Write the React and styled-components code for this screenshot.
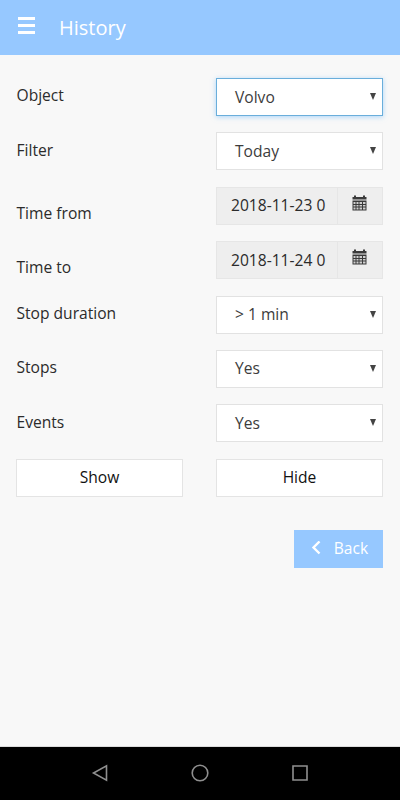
import React from 'react'
import styled, { createGlobalStyle } from 'styled-components';

const GlobalStyle = createGlobalStyle`
  * {
    box-sizing: border-box;
  }
  body {
    margin: 0;
    background: #f8f8f8;
    font-family: "Open Sans", "Noto Sans", sans-serif;
  }
`;

const Page = styled.div`
  display: flex;
  flex-direction: column;
  width: 400px;
  height: 800px;
  overflow: hidden;
  background: #f8f8f8;
  color: #2b2b2b;
  font-size: 15.6px;
  font-weight: 380;
`;

const Header = styled.header`
  display: flex;
  align-items: center;
  height: 55px;
  flex-shrink: 0;
  padding: 0 18px;
  gap: 24px;
  background: #96c8ff;
`;

const MenuButton = styled.div`
  display: flex;
  flex-direction: column;
  justify-content: space-between;
  width: 17px;
  height: 17px;
  margin-top: -4px;
`;

const MenuBar = styled.span`
  height: 3.4px;
  background: #fff;
`;

const Title = styled.h1`
  margin: 0;
  font-size: 20px;
  line-height: 28px;
  font-weight: 390;
  color: #fff;
`;

const Form = styled.main`
  display: flex;
  flex-direction: column;
  flex: 1;
  gap: 16.4px;
  padding: 23px 17px 0 16px;
  border-bottom: 1px solid #dcdcdc;
`;

const Row = styled.div`
  display: grid;
  grid-template-columns: 167px 167px;
  justify-content: space-between;
  height: 38px;
  flex-shrink: 0;
`;

const Label = styled.label`
  line-height: 22px;
  padding-left: 0.5px;
  padding-top: ${({ $low }) => ($low ? '15px' : '6.4px')};
`;

const Select = styled.div`
  display: flex;
  align-items: center;
  justify-content: space-between;
  padding: 0 6px 1px 18px;
  background: #fff;
  color: #3c3c3c;
  border: 1px solid ${({ $focused }) => ($focused ? '#6aaedb' : '#e2e2e2')};
  box-shadow: ${({ $focused }) => ($focused ? '0 1px 5px rgba(120, 190, 250, 0.6)' : 'none')};
`;

const Arrow = styled.span`
  width: 0;
  height: 0;
  border-left: 3.5px solid transparent;
  border-right: 3.5px solid transparent;
  border-top: 7px solid #444;
`;

const DateGroup = styled.div`
  display: flex;
  background: #eee;
  border: 1px solid #e6e6e6;
`;

const DateValue = styled.div`
  display: flex;
  align-items: center;
  width: 121px;
  padding: 0 0 1px 14px;
  white-space: nowrap;
  border-right: 1px solid #e6e6e6;
`;

const DateIcon = styled.div`
  flex: 1;
  display: flex;
  justify-content: center;
  padding: 7px 1px 0 0;
`;

const Button = styled.button`
  display: flex;
  align-items: center;
  justify-content: center;
  padding: 0 0 1px;
  font: inherit;
  color: #111;
  background: #fff;
  border: 1px solid #e4e4e4;
`;

const Footer = styled.div`
  display: flex;
  justify-content: flex-end;
  margin-top: 16.4px;
`;

const BackButton = styled(Button)`
  width: 89px;
  height: 38px;
  gap: 13px;
  padding-left: 2px;
  color: #fff;
  background: #96c8ff;
  border: none;
`;

const SystemBar = styled.nav`
  display: flex;
  align-items: center;
  justify-content: center;
  gap: 82px;
  height: 53px;
  flex-shrink: 0;
  padding-bottom: 1px;
  background: #000;
`;

const CalendarIcon = () => (
  <svg width="15" height="16" viewBox="0 0 15 16">
    <path d="M.5 2h1.5V.5h2V2h7V.5h2V2h1.5v2.5H.5z" fill="#3a3a3a" />
    <path d="M.5 5.5h14v10H.5z" fill="#3a3a3a" />
    <path
      d="M1.5 7h2v2h-2zM4.500 7h2v2h-2zM7.500 7h2.500v2h-2.500zM11 7h2.500v2h-2.500zM1.500 10h2v1.500h-2zM4.500 10h2v1.500h-2zM7.500 10h2.500v1.500h-2.500zM11 10h2.500v1.500h-2.500zM1.500 12.500h2v2h-2zM4.500 12.500h2v2h-2zM7.500 12.500h2.500v2h-2.500zM11 12.500h2.500v2h-2.500z"
      fill="#d0d0d0"
    />
  </svg>
);

const SelectRow = ({ label, value, focused }) => (
  <Row>
    <Label>{label}</Label>
    <Select $focused={focused}>
      {value}
      <Arrow />
    </Select>
  </Row>
);

const DateRow = ({ label, value }) => (
  <Row>
    <Label $low>{label}</Label>
    <DateGroup>
      <DateValue>{value}</DateValue>
      <DateIcon><CalendarIcon /></DateIcon>
    </DateGroup>
  </Row>
);

const App = () => {
  return (
    <Page>
      <GlobalStyle />
      <Header>
        <MenuButton>
          <MenuBar />
          <MenuBar />
          <MenuBar />
        </MenuButton>
        <Title>History</Title>
      </Header>
      <Form>
        <SelectRow label="Object" value="Volvo" focused />
        <SelectRow label="Filter" value="Today" />
        <DateRow label="Time from" value="2018-11-23 0" />
        <DateRow label="Time to" value="2018-11-24 0" />
        <SelectRow label="Stop duration" value="> 1 min" />
        <SelectRow label="Stops" value="Yes" />
        <SelectRow label="Events" value="Yes" />
        <Row>
          <Button>Show</Button>
          <Button>Hide</Button>
        </Row>
        <Footer>
          <BackButton>
            <svg width="10" height="14" viewBox="0 0 10 14">
              <path d="M8.5 .5L2.500 6.500l6 6" fill="none" stroke="#fff" strokeWidth="2.400" />
            </svg>
            Back
          </BackButton>
        </Footer>
      </Form>
      <SystemBar>
        <svg width="18" height="18" viewBox="0 0 18 18" fill="none" stroke="#8f8f8f" strokeWidth="1.6">
          <path d="M15.5 1.800v14.400L2.500 9z" />
        </svg>
        <svg width="18" height="18" viewBox="0 0 18 18" fill="none" stroke="#8f8f8f" strokeWidth="1.6">
          <circle cx="9" cy="9" r="7.8" />
        </svg>
        <svg width="18" height="18" viewBox="0 0 18 18" fill="none" stroke="#8f8f8f" strokeWidth="1.6">
          <path d="M2 2h14v14H2z" />
        </svg>
      </SystemBar>
    </Page>
  );
};

export default App
